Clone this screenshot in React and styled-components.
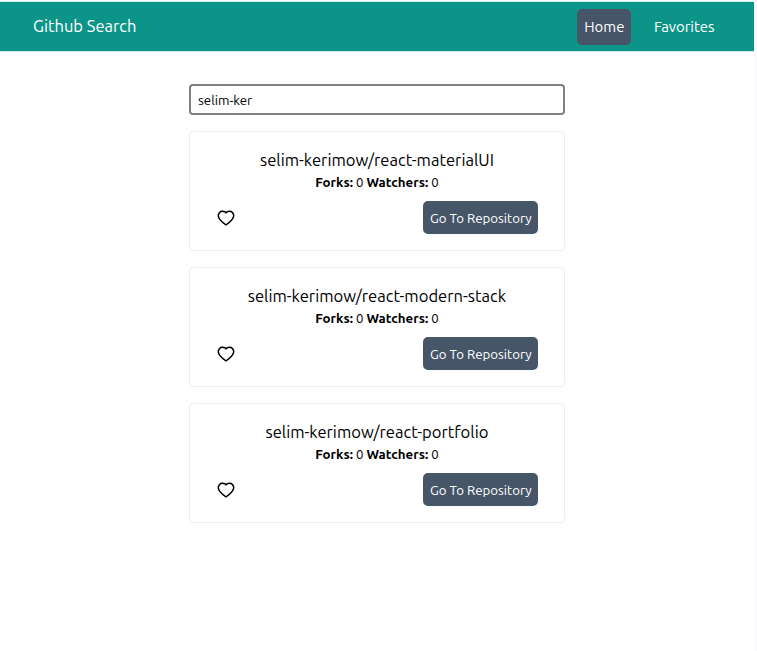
import React from 'react';
import styled, { createGlobalStyle } from 'styled-components';
import { AiOutlineHeart } from 'react-icons/ai';

const GlobalStyle = createGlobalStyle`
  *, *::before, *::after { box-sizing: border-box; }
  body {
    margin: 0;
    background: #fff;
    font-family: Ubuntu, 'Noto Sans', sans-serif;
    color: #000;
  }
`;

const Page = styled.div`
  width: 757px;
  height: 651px;
  border-top: 1px solid #fff;
  border-right: 2px solid #f8f9fe;
  padding-right: 1px;
  overflow: hidden;
`;

const Header = styled.header`
  display: flex;
  align-items: center;
  justify-content: space-between;
  height: 51px;
  padding: 0 32.5px 0 33px;
  background: #0d9488;
  border-top: 1px solid #d6eeec;
  border-bottom: 1px solid #d3ebe9;
  color: #fff;
`;

const Brand = styled.h1`
  margin: 0 0 1px;
  font-size: 16.55px;
  font-weight: 400;
  line-height: 24px;
`;

const Nav = styled.nav`
  display: flex;
  gap: 15.5px;
`;

const NavLink = styled.a`
  display: flex;
  align-items: center;
  justify-content: center;
  height: 36px;
  padding: 0 7px;
  border-radius: 5px;
  background: ${({ $active }) => ($active ? '#475569' : 'transparent')};
  font-size: 14.9px;
`;

const Main = styled.main`
  display: flex;
  flex-direction: column;
  width: 376.6px;
  margin: 32px auto 0;
`;

const SearchInput = styled.input`
  height: 31px;
  margin: 0 0 16px;
  padding: 1px 7.4px 0;
  border: 2px solid #808080;
  border-radius: 4px;
  outline: none;
  background: #fff;
  color: #000;
  font: 13.3px Ubuntu, 'Noto Sans', sans-serif;
`;

const Card = styled.article`
  height: 120px;
  margin-bottom: 16px;
  padding: 16px 26px 0 27.4px;
  border: 1px solid #ededf0;
  border-radius: 4px;
`;

const Title = styled.h2`
  margin: 0 1.5px 0 0;
  font-size: 16.6px;
  font-weight: 400;
  line-height: 24px;
  text-align: center;
`;

const Stats = styled.p`
  margin: 0 1.5px 0 0;
  font-size: 13.25px;
  line-height: 21px;
  text-align: center;
`;

const Actions = styled.div`
  display: flex;
  align-items: center;
  justify-content: space-between;
  margin-top: 8px;
`;

const LikeButton = styled.button`
  display: flex;
  margin: 1px 0 0 -1px;
  padding: 0;
  border: 0;
  background: none;
  color: #000;
`;

const RepoLink = styled.a`
  display: flex;
  align-items: center;
  justify-content: center;
  width: 115px;
  height: 33px;
  padding-top: 2px;
  border-radius: 5px;
  background: #475569;
  color: #fff;
  font-size: 13.25px;
`;

const repositories = [
  'selim-kerimow/react-materialUI',
  'selim-kerimow/react-modern-stack',
  'selim-kerimow/react-portfolio',
];

export default function App() {
  return (
    <Page>
      <GlobalStyle />
      <Header>
        <Brand>Github Search</Brand>
        <Nav>
          <NavLink $active>Home</NavLink>
          <NavLink>Favorites</NavLink>
        </Nav>
      </Header>
      <Main>
        <SearchInput type="text" defaultValue="selim-ker" aria-label="Search" />
        {repositories.map((name) => (
          <Card key={name}>
            <Title>{name}</Title>
            <Stats>
              <strong>Forks:</strong> 0 <strong>Watchers:</strong> 0
            </Stats>
            <Actions>
              <LikeButton aria-label="Add to favorites">
                <AiOutlineHeart size={20} />
              </LikeButton>
              <RepoLink>Go To Repository</RepoLink>
            </Actions>
          </Card>
        ))}
      </Main>
    </Page>
  );
}
